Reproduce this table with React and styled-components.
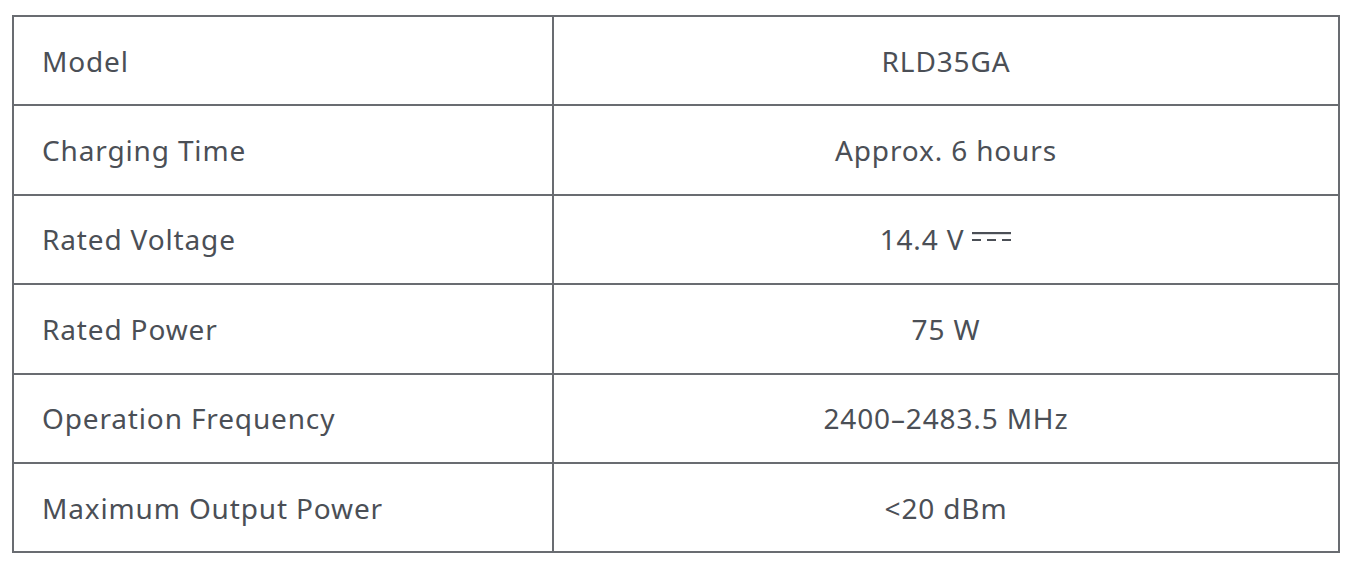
import styled, { createGlobalStyle } from "styled-components";

const GlobalStyle = createGlobalStyle`
  html, body {
    margin: 0;
    padding: 0;
    background: #ffffff;
  }
  body {
    font-family: "Noto Sans", "Open Sans", sans-serif;
  }
`;

const Page = styled.div`
  padding: 15px 13px 0 12px;
`;

const SpecTable = styled.table`
  width: 1328px;
  border-collapse: collapse;
  table-layout: fixed;
  border: 2px solid #696c71;
`;

const Row = styled.tr`
  height: 89.4px;
`;

const Cell = styled.td`
  border: 2px solid #696c71;
  padding: 0 0 0 ${(p) => (p.$center ? 0 : 28)}px;
  text-align: ${(p) => (p.$center ? "center" : "left")};
  font-size: 28px;
  color: #4b4f56;
  letter-spacing: 0.85px;
  width: ${(p) => (p.$center ? "auto" : "540px")};
  box-sizing: border-box;
`;

const DcSymbol = () => (
  <svg
    width="40"
    height="14"
    viewBox="0 0 40 14"
    style={{ verticalAlign: "middle", marginLeft: 8, marginTop: -10 }}
  >
    <rect x="0" y="1" width="39" height="2.2" fill="#4b4f56" />
    <rect x="0" y="8" width="9" height="2" fill="#4b4f56" />
    <rect x="15" y="8" width="9" height="2" fill="#4b4f56" />
    <rect x="30" y="8" width="9" height="2" fill="#4b4f56" />
  </svg>
);

const specs = [
  ["Model", "RLD35GA"],
  ["Charging Time", "Approx. 6 hours"],
  ["Rated Voltage", "14.4 V", true],
  ["Rated Power", "75 W"],
  ["Operation Frequency", "2400–2483.5 MHz"],
  ["Maximum Output Power", "<20 dBm"],
];

const App = () => (
  <>
    <GlobalStyle />
    <Page>
      <SpecTable>
        <tbody>
          {specs.map(([label, value, dc]) => (
            <Row key={label}>
              <Cell>{label}</Cell>
              <Cell $center>
                {value}
                {dc && <DcSymbol />}
              </Cell>
            </Row>
          ))}
        </tbody>
      </SpecTable>
    </Page>
  </>
);

export default App;
